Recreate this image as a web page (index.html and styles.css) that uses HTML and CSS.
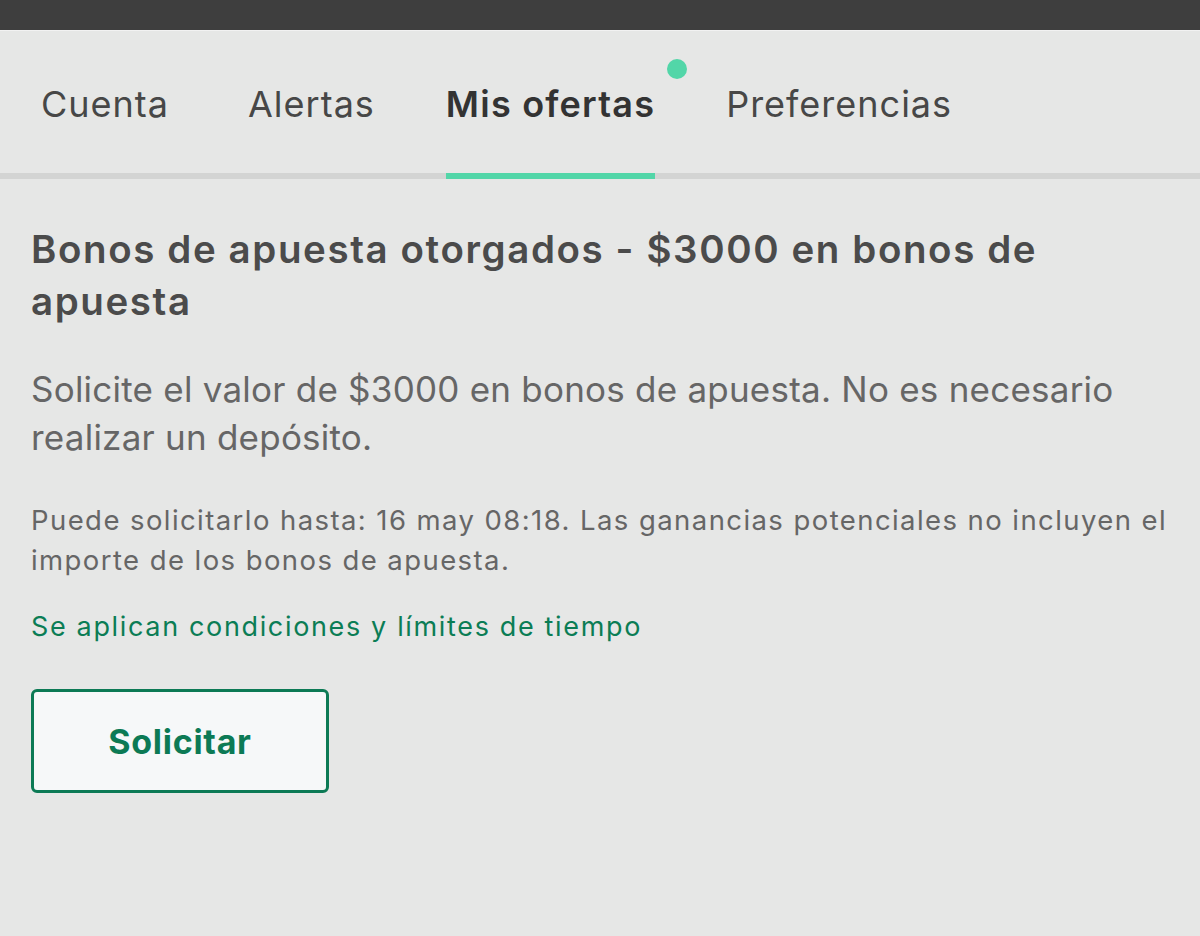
FILE: index.html
```html
<!DOCTYPE html>
<html lang="es">
<head>
  <meta charset="UTF-8">
  <title>Mis ofertas</title>
  <link rel="stylesheet" href="styles.css">
</head>
<body>
  <div class="status-bar"></div>
  <nav class="tabs">
    <a class="tab">Cuenta</a>
    <a class="tab">Alertas</a>
    <a class="tab active">Mis ofertas<span class="dot"></span></a>
    <a class="tab">Preferencias</a>
  </nav>
  <main class="offer">
    <h2>Bonos de apuesta otorgados - $3000 en bonos de apuesta</h2>
    <p class="desc">Solicite el valor de $3000 en bonos de apuesta. No es necesario realizar un depósito.</p>
    <p class="note">Puede solicitarlo hasta: 16 may 08:18. Las ganancias potenciales no incluyen el importe de los bonos de apuesta.</p>
    <a class="terms">Se aplican condiciones y límites de tiempo</a>
    <button class="claim">Solicitar</button>
  </main>
</body>
</html>
```

FILE: styles.css
```css
body {
  margin: 0;
  padding: 0;
  background: #e6e7e6;
  font-family: 'Inter', 'Roboto', Arial, sans-serif;
  min-height: 100vh;
}
.status-bar {
  height: 30px;
  background: #3e3e3e;
  border-bottom: 1px solid #f2f2f2;
}
.tabs {
  display: flex;
  gap: 71px;
  padding: 0 0 0 41px;
  height: 148px;
  border-bottom: 6px solid #d3d4d3;
  box-sizing: border-box;
}
.tab {
  position: relative;
  display: flex;
  align-items: center;
  font-size: 36px;
  letter-spacing: 1px;
  color: #474747;
  margin-bottom: -6px;
  border-bottom: 6px solid transparent;
  padding-top: 4px;
}
.tab:first-child {
  margin-right: 8px;
}
.tab.active {
  font-weight: 600;
  letter-spacing: 1.2px;
  color: #333;
  border-bottom-color: #52d6a8;
}
.dot {
  position: absolute;
  top: 28px;
  right: -32px;
  width: 20px;
  height: 20px;
  border-radius: 50%;
  background: #52d6a8;
}
.offer {
  padding: 44px 20px 0 31px;
}
h2 {
  margin: 0 0 38px 0;
  max-width: 1138px;
  font-size: 38.5px;
  line-height: 52px;
  letter-spacing: 1.6px;
  font-weight: 600;
  color: #4b4b4b;
}
.desc {
  margin: 0 0 39px 0;
  max-width: 1138px;
  font-size: 35px;
  line-height: 48px;
  letter-spacing: 0.23px;
  color: #666;
}
.note {
  margin: 0 0 27px 0;
  font-size: 27.5px;
  line-height: 40px;
  letter-spacing: 1.42px;
  color: #666;
}
.terms {
  display: block;
  font-size: 27px;
  line-height: 40px;
  letter-spacing: 1.65px;
  color: #0b7d55;
}
.claim {
  display: block;
  margin-top: 42px;
  width: 298px;
  height: 104px;
  background: #f6f8f9;
  border: 3px solid #0c7a55;
  border-radius: 6px;
  color: #0c7a55;
  font-family: inherit;
  font-size: 34px;
  letter-spacing: 0.7px;
  font-weight: 700;
}
```
